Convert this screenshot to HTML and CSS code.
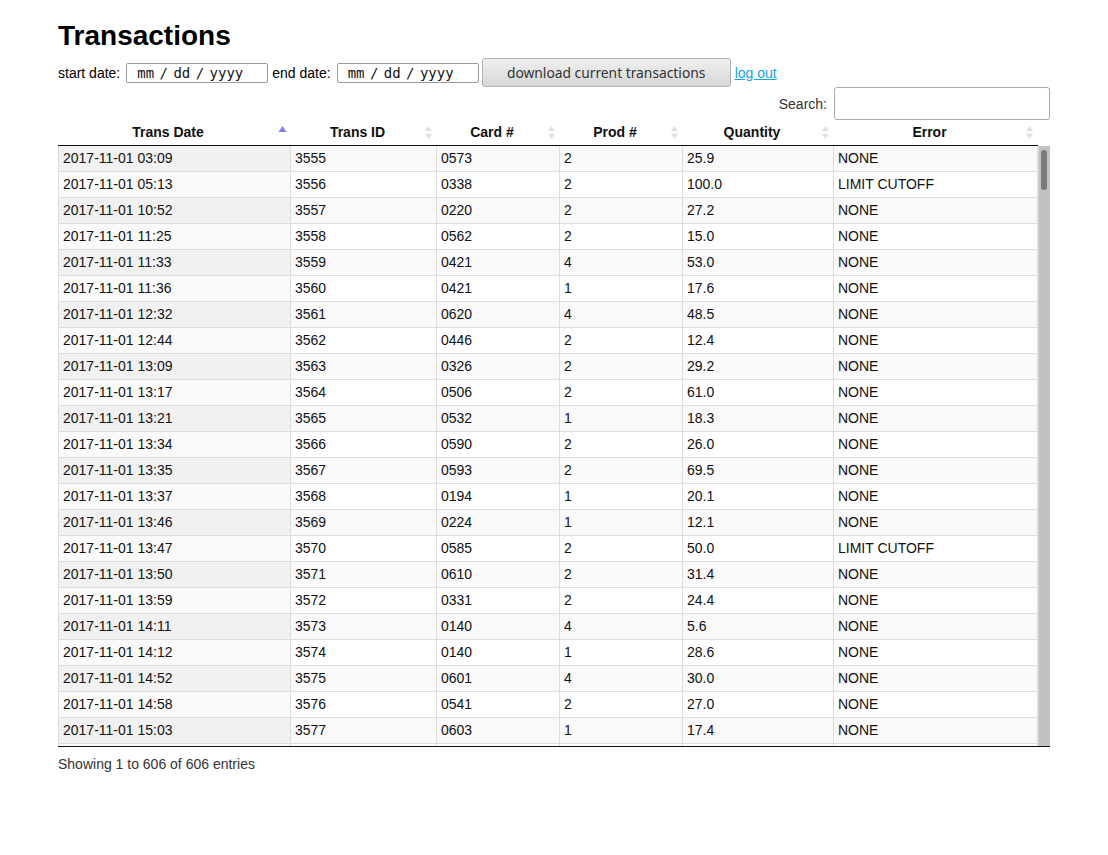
FILE: index.html
```html
<!DOCTYPE html>
<html lang="en">
<head>
<meta charset="utf-8">
<title>Transactions</title>
<link rel="stylesheet" href="styles.css">
</head>
<body>
<div class="page">
  <h1 class="title">Transactions</h1>
  <div class="controls">
    <label class="lbl">start date:</label>
    <div class="date-input">mm / dd / yyyy</div>
    <label class="lbl">end date:</label>
    <div class="date-input">mm / dd / yyyy</div>
    <button class="btn" type="button">download current transactions</button>
    <a class="logout" href="#">log out</a>
  </div>
  <div class="filter">
    <label class="search-lbl">Search:</label>
    <input class="search-input" type="search">
  </div>
  <div class="dt">
    <table class="head-table">
      <colgroup>
        <col class="c1"><col class="c2"><col class="c3"><col class="c4"><col class="c5"><col class="c6">
      </colgroup>
      <thead>
        <tr>
          <th>Trans Date<svg class="sort" viewBox="0 0 9 19" width="9" height="19"><path d="M0.5 9 L4.5 3 L8.5 9 Z" fill="#8080dd"/></svg></th>
          <th>Trans ID<svg class="sort" viewBox="0 0 9 19" width="9" height="19"><path d="M1 8 L4.5 3 L8 8 Z" fill="#e0e0e0"/><path d="M1 11 L4.5 16 L8 11 Z" fill="#e0e0e0"/></svg></th>
          <th>Card #<svg class="sort" viewBox="0 0 9 19" width="9" height="19"><path d="M1 8 L4.5 3 L8 8 Z" fill="#e0e0e0"/><path d="M1 11 L4.5 16 L8 11 Z" fill="#e0e0e0"/></svg></th>
          <th>Prod #<svg class="sort" viewBox="0 0 9 19" width="9" height="19"><path d="M1 8 L4.5 3 L8 8 Z" fill="#e0e0e0"/><path d="M1 11 L4.5 16 L8 11 Z" fill="#e0e0e0"/></svg></th>
          <th>Quantity<svg class="sort" viewBox="0 0 9 19" width="9" height="19"><path d="M1 8 L4.5 3 L8 8 Z" fill="#e0e0e0"/><path d="M1 11 L4.5 16 L8 11 Z" fill="#e0e0e0"/></svg></th>
          <th>Error<svg class="sort" viewBox="0 0 9 19" width="9" height="19"><path d="M1 8 L4.5 3 L8 8 Z" fill="#e0e0e0"/><path d="M1 11 L4.5 16 L8 11 Z" fill="#e0e0e0"/></svg></th>
        </tr>
      </thead>
    </table>
    <div class="scroll-body">
      <div class="table-wrap">
        <table class="body-table">
          <colgroup>
            <col class="c1"><col class="c2"><col class="c3"><col class="c4"><col class="c5"><col class="c6">
          </colgroup>
          <tbody>
            <tr><td>2017-11-01 03:09</td><td>3555</td><td>0573</td><td>2</td><td>25.9</td><td>NONE</td></tr>
            <tr><td>2017-11-01 05:13</td><td>3556</td><td>0338</td><td>2</td><td>100.0</td><td>LIMIT CUTOFF</td></tr>
            <tr><td>2017-11-01 10:52</td><td>3557</td><td>0220</td><td>2</td><td>27.2</td><td>NONE</td></tr>
            <tr><td>2017-11-01 11:25</td><td>3558</td><td>0562</td><td>2</td><td>15.0</td><td>NONE</td></tr>
            <tr><td>2017-11-01 11:33</td><td>3559</td><td>0421</td><td>4</td><td>53.0</td><td>NONE</td></tr>
            <tr><td>2017-11-01 11:36</td><td>3560</td><td>0421</td><td>1</td><td>17.6</td><td>NONE</td></tr>
            <tr><td>2017-11-01 12:32</td><td>3561</td><td>0620</td><td>4</td><td>48.5</td><td>NONE</td></tr>
            <tr><td>2017-11-01 12:44</td><td>3562</td><td>0446</td><td>2</td><td>12.4</td><td>NONE</td></tr>
            <tr><td>2017-11-01 13:09</td><td>3563</td><td>0326</td><td>2</td><td>29.2</td><td>NONE</td></tr>
            <tr><td>2017-11-01 13:17</td><td>3564</td><td>0506</td><td>2</td><td>61.0</td><td>NONE</td></tr>
            <tr><td>2017-11-01 13:21</td><td>3565</td><td>0532</td><td>1</td><td>18.3</td><td>NONE</td></tr>
            <tr><td>2017-11-01 13:34</td><td>3566</td><td>0590</td><td>2</td><td>26.0</td><td>NONE</td></tr>
            <tr><td>2017-11-01 13:35</td><td>3567</td><td>0593</td><td>2</td><td>69.5</td><td>NONE</td></tr>
            <tr><td>2017-11-01 13:37</td><td>3568</td><td>0194</td><td>1</td><td>20.1</td><td>NONE</td></tr>
            <tr><td>2017-11-01 13:46</td><td>3569</td><td>0224</td><td>1</td><td>12.1</td><td>NONE</td></tr>
            <tr><td>2017-11-01 13:47</td><td>3570</td><td>0585</td><td>2</td><td>50.0</td><td>LIMIT CUTOFF</td></tr>
            <tr><td>2017-11-01 13:50</td><td>3571</td><td>0610</td><td>2</td><td>31.4</td><td>NONE</td></tr>
            <tr><td>2017-11-01 13:59</td><td>3572</td><td>0331</td><td>2</td><td>24.4</td><td>NONE</td></tr>
            <tr><td>2017-11-01 14:11</td><td>3573</td><td>0140</td><td>4</td><td>5.6</td><td>NONE</td></tr>
            <tr><td>2017-11-01 14:12</td><td>3574</td><td>0140</td><td>1</td><td>28.6</td><td>NONE</td></tr>
            <tr><td>2017-11-01 14:52</td><td>3575</td><td>0601</td><td>4</td><td>30.0</td><td>NONE</td></tr>
            <tr><td>2017-11-01 14:58</td><td>3576</td><td>0541</td><td>2</td><td>27.0</td><td>NONE</td></tr>
            <tr><td>2017-11-01 15:03</td><td>3577</td><td>0603</td><td>1</td><td>17.4</td><td>NONE</td></tr>
            <tr class="partial"><td></td><td></td><td></td><td></td><td></td><td></td></tr>
          </tbody>
        </table>
      </div>
      <div class="vscroll"><div class="thumb"></div></div>
    </div>
  </div>
  <div class="info">Showing 1 to 606 of 606 entries</div>
</div>
</body>
</html>
```
FILE: styles.css
```css
html, body {
  margin: 0;
  padding: 0;
  background: #fff;
}
body {
  font-family: "Liberation Sans", Arial, sans-serif;
  font-size: 14px;
  color: #000;
}
.page {
  width: 992px;
  padding: 20px 58px 0 58px;
}
.title {
  margin: 0;
  font-size: 28px;
  line-height: 32px;
  font-weight: bold;
}
.controls {
  margin-top: 6px;
  height: 29px;
  display: flex;
  align-items: center;
  gap: 4px;
}
.lbl {
  line-height: 16px;
  padding-top: 1px;
  margin-right: 2px;
}
.date-input {
  box-sizing: border-box;
  width: 142px;
  height: 20px;
  border: 1px solid #9a9a9a;
  border-radius: 2px;
  padding-left: 10px;
  font-family: "DejaVu Sans Mono", monospace;
  font-size: 14px;
  word-spacing: -3px;
  line-height: 18px;
  color: #111;
  margin-top: 1px;
  white-space: pre;
  overflow: hidden;
}
.btn {
  box-sizing: border-box;
  width: 249px;
  height: 29px;
  border: 1px solid #b3b3b3;
  border-radius: 3px;
  background: linear-gradient(#f0f0f0, #d6d6d6);
  font-family: "Noto Sans", sans-serif;
  font-size: 13.8px;
  color: #333;
  padding: 0;
  margin-left: -1px;
}
.logout {
  color: #0ca5e9;
  text-decoration: underline;
  line-height: 16px;
}
.filter {
  height: 33px;
  display: flex;
  justify-content: flex-end;
  align-items: center;
  gap: 7px;
}
.search-lbl {
  color: #333;
}
.search-input {
  box-sizing: border-box;
  width: 216px;
  height: 33px;
  border: 1px solid #aaa;
  border-radius: 3px;
  background: transparent;
  margin: 0;
  padding: 5px;
}
.dt {
  width: 992px;
}
.head-table, .body-table {
  width: 980px;
  table-layout: fixed;
  border-collapse: separate;
  border-spacing: 0;
  font-size: 14px;
}
.c1 { width: 233px; }
.c2 { width: 146px; }
.c3 { width: 123px; }
.c4 { width: 123px; }
.c5 { width: 151px; }
.c6 { width: 204px; }
.head-table th {
  position: relative;
  height: 26px;
  box-sizing: border-box;
  padding: 4px 17px 4px 4px;
  line-height: 17px;
  font-weight: bold;
  text-align: center;
  color: #111;
  border-bottom: 1px solid #111;
  white-space: nowrap;
}
.sort {
  position: absolute;
  right: 4px;
  top: 3px;
}
.scroll-body {
  height: 600px;
  overflow: hidden;
  display: flex;
  border-bottom: 1px solid #111;
}
.table-wrap {
  flex: 0 0 980px;
  overflow: hidden;
}
.vscroll {
  flex: 0 0 12px;
  box-sizing: border-box;
  background: #c2c2c2;
  border-left: 1px solid #d6d6d6;
  padding: 4px 3px 0 2px;
}
.thumb {
  height: 40px;
  border-radius: 3px;
  background: #7b7b7b;
}
.body-table td {
  padding: 4px;
  line-height: 17px;
  border-top: 1px solid #ddd;
  border-right: 1px solid #ddd;
  white-space: nowrap;
  color: #111;
}
.body-table tr.partial td {
  height: 17px;
}
.body-table td:first-child {
  border-left: 1px solid #ddd;
}
.body-table tr:first-child td {
  border-top: none;
}
.body-table tr:nth-child(odd) td {
  background: #f9f9f9;
}
.body-table tr:nth-child(odd) td:first-child {
  background: #f1f1f1;
}
.body-table tr:nth-child(even) td {
  background: #fff;
}
.body-table tr:nth-child(even) td:first-child {
  background: #fafafa;
}
.info {
  padding-top: 9px;
  color: #333;
  line-height: 17px;
}
```
